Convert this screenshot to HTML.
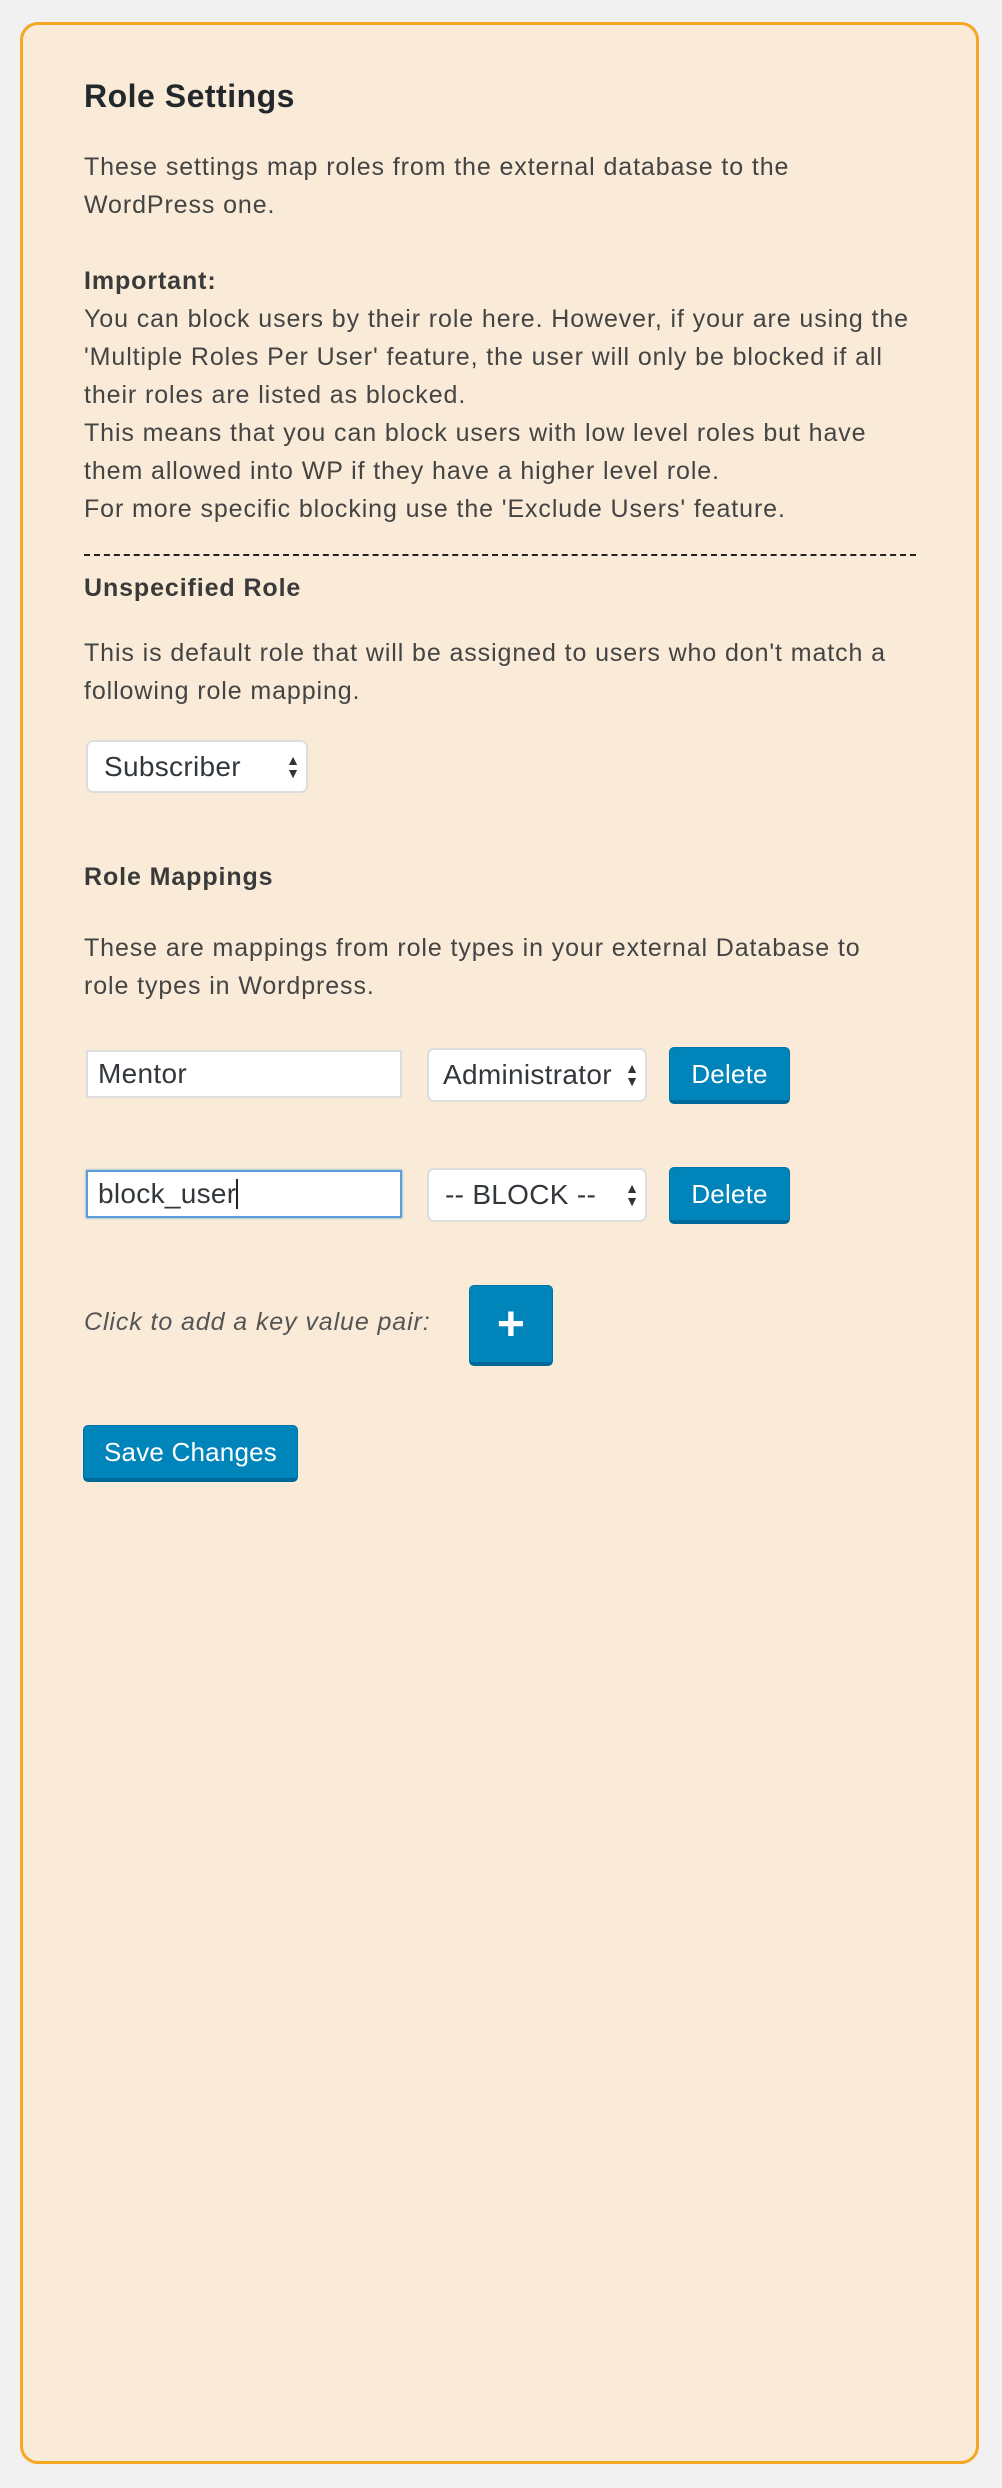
<!DOCTYPE html>
<html><head><meta charset="utf-8"><style>
*{box-sizing:border-box;margin:0;padding:0}
html,body{width:1002px;height:2488px;background:#f1f1f1;overflow:hidden}
body{position:relative;font-family:"Liberation Sans",Arial,sans-serif;color:#444;font-size:25px;letter-spacing:0.9px}
.box{position:absolute;left:20px;top:22px;width:959px;height:2442px;background:#f9ebd7;border:3px solid #f5a623;border-radius:18px}
.a{position:absolute;left:84px;white-space:nowrap}
.p{line-height:38px}
b{font-weight:bold;color:#3a3a3a}
.h1{font-size:32px;font-weight:bold;color:#23282d;letter-spacing:0.5px}
.dash{position:absolute;left:84px;top:554px;width:832px;border-top:2px dashed #222}
.sel{position:absolute;background:#fff;border:2px solid #ddd;border-radius:7px;color:#32373c;font-size:28px;letter-spacing:0.3px;line-height:1;display:flex;align-items:center;padding-left:16px}
.sel .ar{position:absolute;right:6px;top:50%;transform:translateY(-50%);font-size:14px;line-height:13px;color:#333;text-align:center;letter-spacing:0}
.inp{position:absolute;background:#fff;border:2px solid #ddd;color:#32373c;font-size:28px;letter-spacing:0.3px;display:flex;align-items:center;padding-left:10px}
.btn{position:absolute;background:#0085ba;border:1px solid #0073aa;border-bottom:4px solid #006799;border-radius:5px;color:#fff;font-size:26px;letter-spacing:0.2px;display:flex;align-items:center;justify-content:center}
</style></head><body>
<div class="box"></div>
<div class="a h1" style="top:78px">Role Settings</div>
<div class="a p" style="top:148px">These settings map roles from the external database to the<br>WordPress one.</div>
<div class="a p" style="top:262px"><b>Important:</b><br>You can block users by their role here. However, if your are using the<br>'Multiple Roles Per User' feature, the user will only be blocked if all<br>their roles are listed as blocked.<br>This means that you can block users with low level roles but have<br>them allowed into WP if they have a higher level role.<br>For more specific blocking use the 'Exclude Users' feature.</div>
<div class="dash"></div>
<div class="a p" style="top:569px"><b>Unspecified Role</b></div>
<div class="a p" style="top:634px">This is default role that will be assigned to users who don't match a<br>following role mapping.</div>
<div class="sel" style="left:86px;top:740px;width:222px;height:53px">Subscriber<span class="ar">▲<br>▼</span></div>
<div class="a p" style="top:858px"><b>Role Mappings</b></div>
<div class="a p" style="top:929px">These are mappings from role types in your external Database to<br>role types in Wordpress.</div>
<div class="inp" style="left:86px;top:1050px;width:316px;height:48px">Mentor</div>
<div class="sel" style="left:427px;top:1048px;width:220px;height:54px;padding-left:14px">Administrator<span class="ar">▲<br>▼</span></div>
<div class="btn" style="left:669px;top:1047px;width:121px;height:57px">Delete</div>
<div class="inp" style="left:86px;top:1170px;width:316px;height:48px;border-color:#5b9dd9;box-shadow:0 0 2px rgba(30,140,190,.8)">block_user<span style="display:inline-block;width:2px;height:30px;background:#222"></span></div>
<div class="sel" style="left:427px;top:1168px;width:220px;height:54px">-- BLOCK --<span class="ar">▲<br>▼</span></div>
<div class="btn" style="left:669px;top:1167px;width:121px;height:57px">Delete</div>
<div class="a p" style="top:1303px;font-style:italic;color:#555">Click to add a key value pair:</div>
<div class="btn" style="left:469px;top:1285px;width:84px;height:81px;font-size:48px;font-weight:bold">+</div>
<div class="btn" style="left:83px;top:1425px;width:215px;height:57px">Save Changes</div>
</body></html>
